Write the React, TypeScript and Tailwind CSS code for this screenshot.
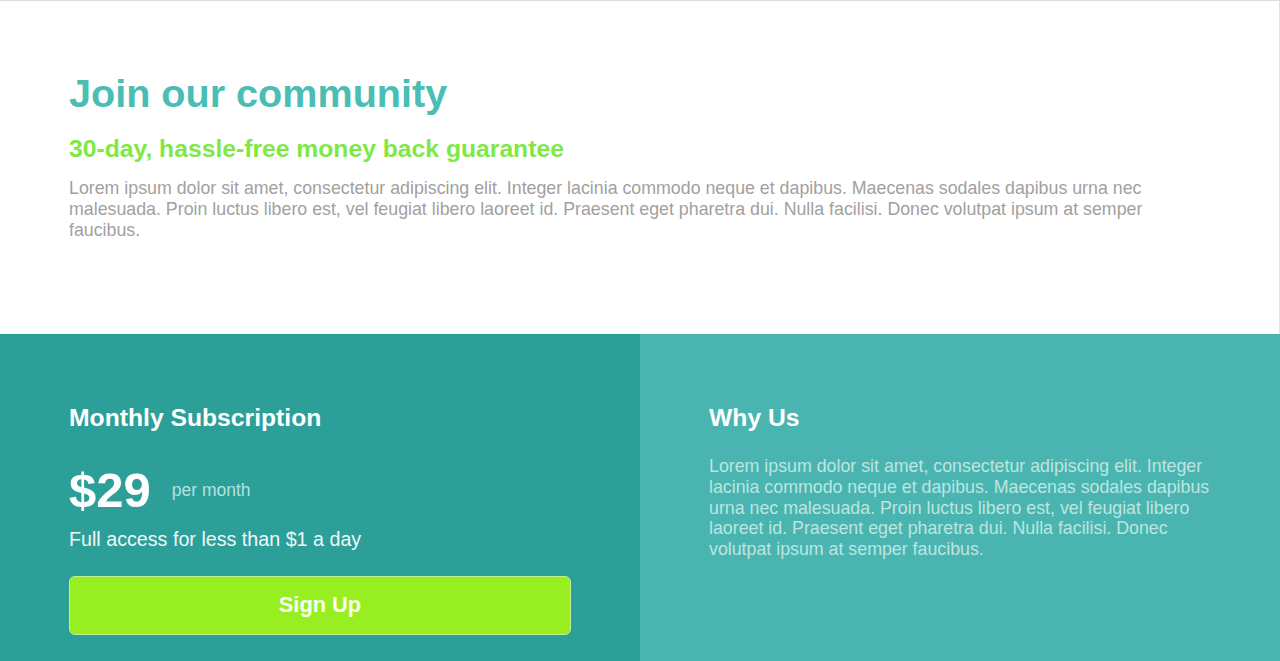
export default function App() {
  return (
    <div className="min-h-screen bg-white font-['Liberation_Sans',Arial,sans-serif]">
      <div className="w-full border-t border-[#dcdcdc]">
        {/* Top */}
        <section className="border-r border-[#e2e2e2] px-[69px] pt-[68px] pb-[93px]">
          <h1 className="text-[39.6px] leading-[48px] font-bold text-[#4abdb4]">
            Join our community
          </h1>
          <h2 className="mt-[17px] text-[24.7px] leading-[29px] font-bold text-[#7ee845]">
            30-day, hassle-free money back guarantee
          </h2>
          <p className="mt-[15px] text-[17.8px] leading-[21px] text-[#a39f9f]">
            Lorem ipsum dolor sit amet, consectetur adipiscing elit. Integer lacinia commodo neque et dapibus. Maecenas sodales dapibus urna nec malesuada. Proin luctus libero est, vel feugiat libero laoreet id. Praesent eget pharetra dui. Nulla facilisi. Donec volutpat ipsum at semper faucibus.
          </p>
        </section>

        {/* Bottom */}
        <section className="grid grid-cols-2">
          <div className="bg-[#2c9f98] px-[69px] pt-[69px] pb-[69px]">
            <h3 className="text-[24.7px] leading-[30px] font-bold text-white">Monthly Subscription</h3>
            <div className="mt-[28px] flex items-center">
              <span className="text-[49px] leading-[59px] font-bold text-white">$29</span>
              <span className="ml-[21px] text-[17.5px] text-[#b4e2de]">per month</span>
            </div>
            <p className="mt-[7px] text-[19.7px] leading-[24px] text-[#eef9f8]">
              Full access for less than $1 a day
            </p>
            <button className="mt-[25px] w-full h-[59px] rounded-[6px] border border-[#c4ef8c] bg-[#97ef21] text-[21.8px] font-bold text-[#fbfff2]">
              Sign Up
            </button>
          </div>
          <div className="bg-[#4ab5b0] px-[69px] pt-[69px] pb-[69px]">
            <h3 className="text-[24.7px] leading-[30px] font-bold text-white">Why Us</h3>
            <p className="mt-[23px] text-[17.8px] leading-[20.75px] text-[#bce5e1]">
              Lorem ipsum dolor sit amet, consectetur adipiscing elit. Integer lacinia commodo neque et dapibus. Maecenas sodales dapibus urna nec malesuada. Proin luctus libero est, vel feugiat libero laoreet id. Praesent eget pharetra dui. Nulla facilisi. Donec volutpat ipsum at semper faucibus.
            </p>
          </div>
        </section>
      </div>
    </div>
  );
}
